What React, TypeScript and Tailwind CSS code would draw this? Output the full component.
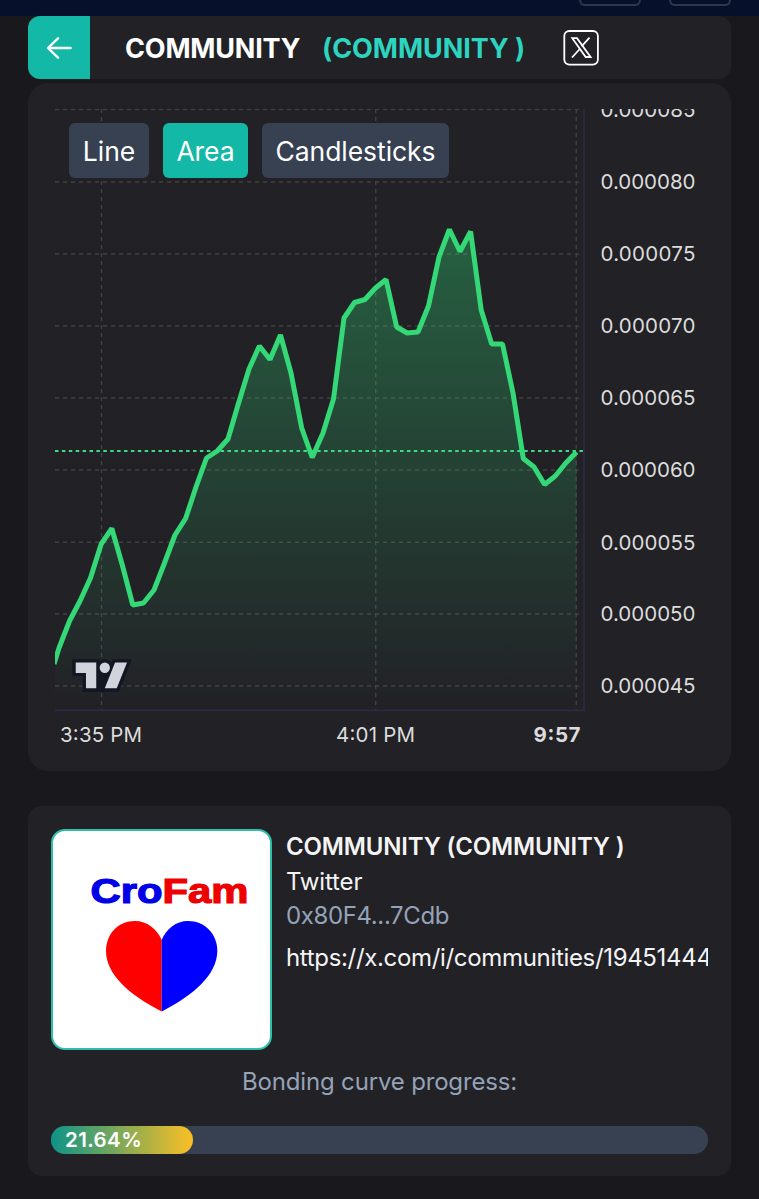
import React, { useState } from 'react'

const prices = [
  [54, 664], [59, 648], [69.5, 621], [80, 601], [90.5, 578], [101.2, 544], [111.8, 528.5], [122.3, 565],
  [132.8, 605], [143.5, 603], [154, 590], [164.5, 563], [175, 535], [185.6, 518.5], [196, 487],
  [206.5, 458], [217.2, 451], [228, 439], [238.3, 404], [249, 369], [259.4, 346], [270, 359.5],
  [280.5, 335], [291, 373], [301.7, 428], [312.2, 457.5], [323, 433], [333.5, 399], [344, 318],
  [354.5, 302.5], [365, 299.5], [375.5, 288], [386, 279.5], [396.7, 327], [407.2, 333], [418, 332],
  [428.5, 306], [439, 257], [449.4, 229.5], [460, 251.5], [470.6, 231.5], [481.2, 310], [491.7, 344],
  [502.5, 344], [513, 393], [523.3, 458.5], [534, 467], [544.6, 484.5], [555.3, 476], [565.8, 463],
  [576.5, 452],
]

const scale = [
  { y: 109.5, label: '0.000085' },
  { y: 182, label: '0.000080' },
  { y: 254, label: '0.000075' },
  { y: 326, label: '0.000070' },
  { y: 398, label: '0.000065' },
  { y: 470, label: '0.000060' },
  { y: 542.3, label: '0.000055' },
  { y: 614, label: '0.000050' },
  { y: 686, label: '0.000045' },
]

const times = [101.5, 375.7, 576.3]

function PriceChart() {
  const line = 'M' + prices.map((p) => p.join(' ')).join('L')

  return (
    <svg viewBox="55 109 653 650" className="block w-[653px] h-[650px]" fontFamily="Inter, sans-serif">
      <defs>
        <linearGradient id="area" gradientUnits="userSpaceOnUse" x1="0" y1="229" x2="0" y2="710">
          <stop offset="0" stopColor="#2edc76" stopOpacity="0.34" />
          <stop offset="1" stopColor="#2edc76" stopOpacity="0" />
        </linearGradient>
        <clipPath id="pane">
          <rect x="55" y="109" width="529" height="602" />
        </clipPath>
      </defs>

      <g stroke="#414143" strokeWidth="1.4" strokeDasharray="4 4">
        {scale.map((s) => (
          <line key={s.label} x1="55" x2="583" y1={s.y} y2={s.y} />
        ))}
        {times.map((x) => (
          <line key={x} x1={x} x2={x} y1="109" y2="710" />
        ))}
      </g>

      <g clipPath="url(#pane)">
        <path d={line + 'L576.5 710L55 710Z'} fill="url(#area)" />
        <line x1="55" x2="583" y1="451" y2="451" stroke="#3ddc84" strokeWidth="1.8" strokeDasharray="3.5 3.4" />
        <path d={line} fill="none" stroke="#35d877" strokeWidth="5" strokeLinejoin="bevel" />
      </g>
      <path d="M55 710.3H584V109" fill="none" stroke="#2b2b43" strokeWidth="1.7" />

      <g fill="#dcdcdc" fontSize="20.5">
        {scale.map((s) => (
          <text key={s.label} x="600.5" y={s.y + 7.3} textLength="95" lengthAdjust="spacing">
            {s.label}
          </text>
        ))}
        <text x="60" y="742" textLength="82">3:35 PM</text>
        <text x="336" y="742" textLength="79">4:01 PM</text>
        <text x="533.5" y="742" textLength="47" fontWeight="700">9:57</text>
      </g>

      <g transform="translate(72.3 659.2) scale(1.71)">
        <path
          fill="#131722"
          d="M2 0H0v10h6v9h21.4l.5-1.3 6-15 1-2.7H23.7l-.5 1.3-.2.6a5 5 0 0 0-7-.9V0H2Z"
        />
        <path
          fill="#d1d4dc"
          d="M14 2H2v6h6v9h6V2Zm12 15h-7l6-15h7l-6 15Zm-7-9a3 3 0 1 0 0-6 3 3 0 0 0 0 6Z"
        />
      </g>
    </svg>
  )
}

function Header() {
  return (
    <div className="flex items-center h-[63px] rounded-xl bg-[#222126] overflow-hidden">
      <button className="flex items-center justify-center w-[62px] h-full bg-[#14b8a6]">
        <svg width="28" height="24" viewBox="0 0 28 24" fill="none" stroke="white" strokeWidth="2.4" strokeLinecap="round" strokeLinejoin="round">
          <path d="M25.5 12H3M13 2.3L3 12l10 9.7" />
        </svg>
      </button>
      <h1 className="ml-[35px] w-[197px] pt-[3px] text-[27px] tracking-[-0.2px] font-bold text-white whitespace-pre">COMMUNITY</h1>
      <span className="w-[241px] pt-[3px] text-[27px] tracking-[-0.05px] font-bold text-[#2dd4bf] whitespace-pre">(COMMUNITY )</span>
      <svg width="36" height="36" viewBox="0 0 36 36" fill="none" stroke="white">
        <rect x="1.3" y="1" width="33.6" height="33.6" rx="5" strokeWidth="1.8" />
        <path d="M9.300 8.200h4.700L27.600 27h-4.900z" strokeWidth="1.8" />
        <path d="M26.500 7.600l-7.900 8.700M16.800 19L9 27.500" strokeWidth="1.8" />
      </svg>
    </div>
  )
}

function ChartCard() {
  const [mode, setMode] = useState('Area')
  const modes = [
    { name: 'Line', size: 'w-20' },
    { name: 'Area', size: 'w-[85px]' },
    { name: 'Candlesticks', size: 'w-[187px]' },
  ]

  return (
    <div className="relative mt-1 h-[688px] pt-[26px] pl-[27px] rounded-[20px] bg-[#222126]">
      <PriceChart />
      <div className="absolute left-[41px] top-10 flex gap-3.5">
        {modes.map((m) => (
          <button
            key={m.name}
            onClick={() => setMode(m.name)}
            className={`${m.size} h-[55px] pt-0.5 rounded-md text-[26.5px] tracking-[-0.05px] text-white ${mode === m.name ? 'bg-[#14b8a6]' : 'bg-[#374151]'}`}
          >
            {m.name}
          </button>
        ))}
      </div>
    </div>
  )
}

function TokenLogo() {
  return (
    <div className="w-[221px] h-[221px] shrink-0 rounded-[14px] border-2 border-[#2dbfa9] bg-white overflow-hidden">
      <svg width="217" height="217" viewBox="53 831 217 217">
        <text
          x="90.5"
          y="902.7"
          fontFamily="Liberation Sans, Arial, sans-serif"
          fontWeight="700"
          fontSize="35"
          textLength="158"
          lengthAdjust="spacingAndGlyphs"
          strokeWidth="1.2"
        >
          <tspan fill="#0000e8" stroke="#0000e8">Cro</tspan>
          <tspan fill="#ee0000" stroke="#ee0000">Fam</tspan>
        </text>
        <path fill="#ff0000" d="M161.7 940C157 929 147 921 135 921C118 921 106 934 106 951C106 974 129 995 161.7 1011.5Z" />
        <path fill="#0000ff" d="M161.7 940C166 929 176 921 188 921C205 921 217.3 934 217.3 951C217.3 974 194 995 161.7 1011.5Z" />
      </svg>
    </div>
  )
}

function TokenCard() {
  const progress = 21.64

  return (
    <div className="mt-[35px] h-[370px] px-[23px] pt-[23px] rounded-[14px] bg-[#222126]">
      <div className="flex">
        <TokenLogo />
        <div className="ml-3.5 min-w-0 flex-1 h-[221px] pt-px text-[24px] leading-[34.5px] text-[#f4f4f5]">
          <p className="font-semibold tracking-[-0.18px] whitespace-nowrap">COMMUNITY (COMMUNITY )</p>
          <p className="tracking-[-0.15px]">Twitter</p>
          <p className="tracking-[-0.38px] text-[#94a3b8]">0x80F4...7Cdb</p>
          <p className="mt-[7px] tracking-[-0.33px] overflow-hidden whitespace-nowrap">https://x.com/i/communities/1945144459</p>
        </div>
      </div>
      <p className="mt-[14px] text-center text-[24px] leading-9 tracking-[-0.17px] text-[#94a3b8]">Bonding curve progress:</p>
      <div className="mt-[26px] h-7 rounded-full bg-[#374151]">
        <div
          className="flex items-center h-full rounded-full pl-3.5 text-[20.5px] tracking-[0.4px] font-semibold text-white bg-linear-to-r/srgb from-[#0d9488] to-[#fbbf24]"
          style={{ width: `${progress}%` }}
        >
          {progress}%
        </div>
      </div>
    </div>
  )
}

export default function App() {
  return (
    <div className="h-[1199px] overflow-hidden bg-[#19181d] font-[Inter,sans-serif]">
      <div className="flex justify-end gap-7 h-4 pr-7 bg-[#07102a]">
        <div className="w-[62px] h-1.5 rounded-b-md border-2 border-t-0 border-[#303748]" />
        <div className="w-[62px] h-1.5 rounded-b-md border-2 border-t-0 border-[#303748]" />
      </div>
      <main className="px-7">
        <Header />
        <ChartCard />
        <TokenCard />
      </main>
    </div>
  )
}
